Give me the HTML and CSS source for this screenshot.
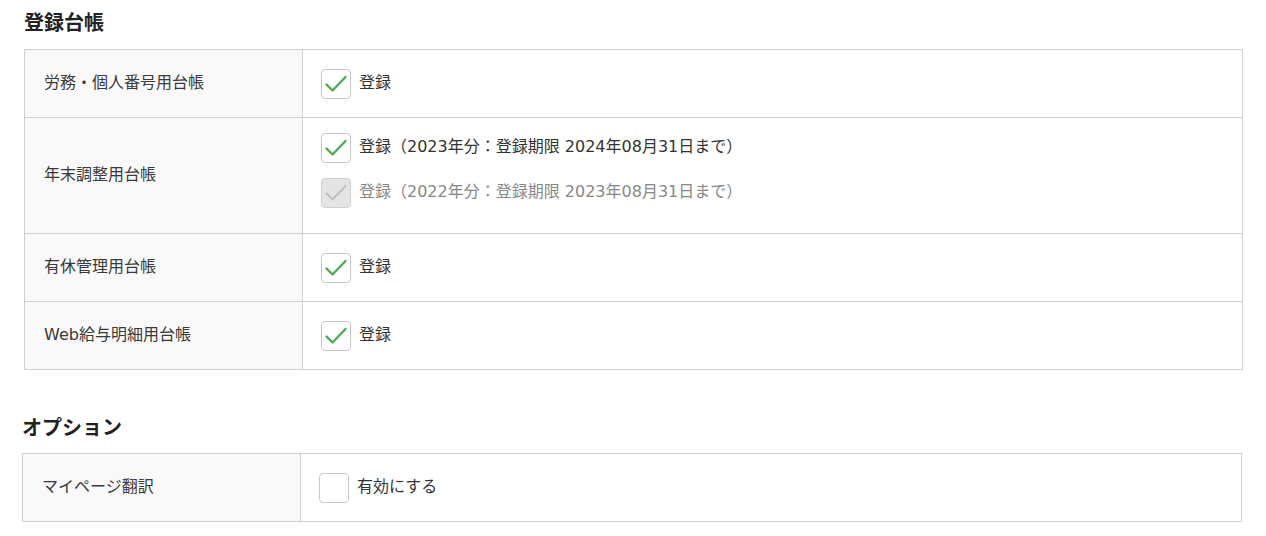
FILE: index.html
```html
<!DOCTYPE html>
<html lang="ja">
<head>
    <meta charset="UTF-8">
    <meta name="viewport" content="width=device-width, initial-scale=1.0">
    <title>登録台帳</title>
    <link rel="stylesheet" href="styles.css">
</head>
<body>
    <div class="page">
        <section class="section section-ledger">
            <h2 class="section-title">登録台帳</h2>
            <div class="form-table">
                <div class="form-row">
                    <div class="form-label">労務・個人番号用台帳</div>
                    <div class="form-value">
                        <label class="check">
                            <span class="check-box"><svg class="check-mark" viewBox="0 0 30 30"><polyline points="5.5,15.5 11.5,21.5 24.5,8"/></svg></span>
                            <span class="check-text">登録</span>
                        </label>
                    </div>
                </div>
                <div class="form-row">
                    <div class="form-label">年末調整用台帳</div>
                    <div class="form-value form-value-list">
                        <label class="check">
                            <span class="check-box"><svg class="check-mark" viewBox="0 0 30 30"><polyline points="5.5,15.5 11.5,21.5 24.5,8"/></svg></span>
                            <span class="check-text">登録（2023年分：登録期限 2024年08月31日まで）</span>
                        </label>
                        <label class="check is-disabled">
                            <span class="check-box"><svg class="check-mark" viewBox="0 0 30 30"><polyline points="5.5,15.5 11.5,21.5 24.5,8"/></svg></span>
                            <span class="check-text">登録（2022年分：登録期限 2023年08月31日まで）</span>
                        </label>
                    </div>
                </div>
                <div class="form-row">
                    <div class="form-label">有休管理用台帳</div>
                    <div class="form-value">
                        <label class="check">
                            <span class="check-box"><svg class="check-mark" viewBox="0 0 30 30"><polyline points="5.5,15.5 11.5,21.5 24.5,8"/></svg></span>
                            <span class="check-text">登録</span>
                        </label>
                    </div>
                </div>
                <div class="form-row">
                    <div class="form-label">Web給与明細用台帳</div>
                    <div class="form-value">
                        <label class="check">
                            <span class="check-box"><svg class="check-mark" viewBox="0 0 30 30"><polyline points="5.5,15.5 11.5,21.5 24.5,8"/></svg></span>
                            <span class="check-text">登録</span>
                        </label>
                    </div>
                </div>
            </div>
        </section>

        <section class="section section-option">
            <h2 class="section-title">オプション</h2>
            <div class="form-table">
                <div class="form-row">
                    <div class="form-label">マイページ翻訳</div>
                    <div class="form-value">
                        <label class="check">
                            <span class="check-box"></span>
                            <span class="check-text">有効にする</span>
                        </label>
                    </div>
                </div>
            </div>
        </section>
    </div>
</body>
</html>
```

FILE: styles.css
```css
body {
    margin: 0;
    padding: 0;
    background-color: #fff;
    color: #333;
    font-family: "DejaVu Sans", "Noto Sans CJK JP", sans-serif;
    font-size: 16px;
}

.page {
    padding-top: 7px;
}

.section-ledger {
    margin-left: 24px;
    width: 1219px;
}

.section-option {
    margin-top: 42px;
    margin-left: 22px;
    width: 1220px;
}

.section-title {
    margin: 0 0 12px;
    font-family: "Noto Sans CJK JP", sans-serif;
    font-size: 20px;
    line-height: 30px;
    font-weight: bold;
    color: #222;
}

.section-option .section-title {
    margin-top: 1px;
    margin-bottom: 11px;
}

.form-table {
    border: 1px solid #d0d0d0;
}

.form-row {
    display: flex;
    border-bottom: 1px solid #d0d0d0;
}

.form-row:last-child {
    border-bottom: none;
}

.form-label {
    width: 258px;
    flex-shrink: 0;
    display: flex;
    align-items: center;
    padding: 0 0 5px 19px;
    background-color: #f9f9f9;
    border-right: 1px solid #d0d0d0;
    color: #3a3a3a;
}

.form-value {
    flex: 1;
    display: flex;
    align-items: center;
    padding: 19px 18px 18px;
}

.form-value-list {
    flex-direction: column;
    align-items: flex-start;
    gap: 15px;
    padding: 15px 18px 25px;
}

.check {
    display: flex;
    align-items: center;
    gap: 8px;
    cursor: pointer;
}

.check-box {
    position: relative;
    width: 28px;
    height: 28px;
    border: 1px solid #c8c8c8;
    border-radius: 4px;
    background-color: #fff;
    box-sizing: content-box;
}

.check-mark {
    position: absolute;
    left: -1px;
    top: -1px;
    width: 30px;
    height: 30px;
    fill: none;
    stroke: #4aac52;
    stroke-width: 2.3;
    stroke-linecap: round;
    stroke-linejoin: round;
}

.check-text {
    line-height: 28px;
    padding-bottom: 2px;
}

.check.is-disabled {
    cursor: default;
}

.check.is-disabled .check-box {
    background-color: #e4e4e4;
    border-color: #cfcfcf;
}

.check.is-disabled .check-mark {
    stroke: #c2c2c2;
}

.check.is-disabled .check-text {
    color: #888;
}
```
